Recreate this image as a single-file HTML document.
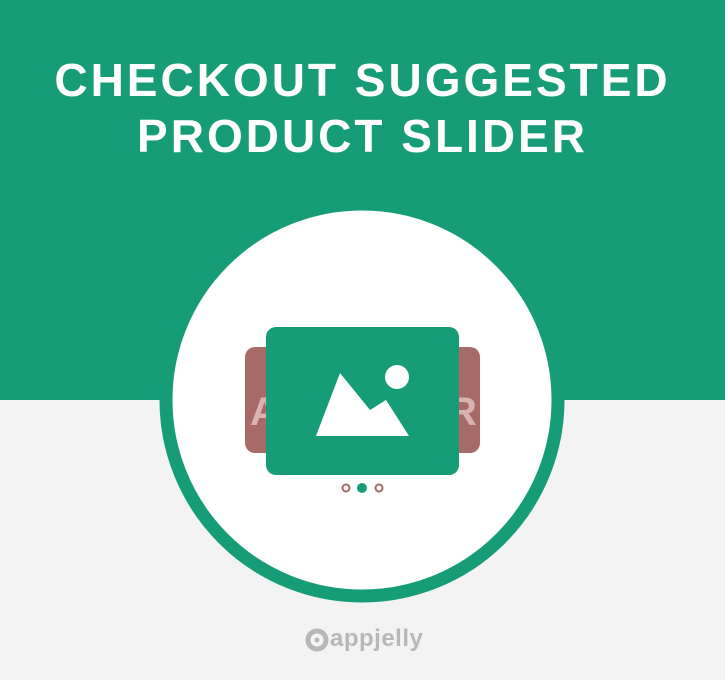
<!DOCTYPE html>
<html><head><style>
body{margin:0;width:725px;height:680px;overflow:hidden;background:#f3f3f3;position:relative;font-family:"Liberation Sans",sans-serif}
.top{position:absolute;left:0;top:0;width:725px;height:400px;background:#179c78}
h1{position:absolute;left:0;top:52px;width:725px;margin:0;text-align:center;color:#fff;font-size:46px;line-height:56px;font-weight:bold;letter-spacing:3px}
.logo{position:absolute;left:330px;top:625px;font-size:24px;font-weight:bold;color:#b8b8b8;letter-spacing:0.5px}
</style></head><body>
<div class="top"></div>
<h1>CHECKOUT SUGGESTED<br>PRODUCT SLIDER</h1>
<svg style="position:absolute;left:0;top:0" width="725" height="680">
<circle cx="362" cy="400" r="196" fill="#fff" stroke="#179c78" stroke-width="13"/>
<rect x="245" y="347" width="235" height="106" rx="10" fill="#a86a67"/>
<text x="250" y="425" font-family="Liberation Sans" font-weight="bold" font-size="40" fill="#d9b3b1">A</text>
<text x="448" y="425" font-family="Liberation Sans" font-weight="bold" font-size="40" fill="#d9b3b1">R</text>
<rect x="266" y="327" width="193" height="148" rx="10" fill="#179c78"/>
<polygon points="316,436 340,373 370,410 386,400 409,436" fill="#fff"/>
<circle cx="397" cy="377" r="12" fill="#fff"/>
<circle cx="346" cy="488" r="3.5" fill="none" stroke="#a86a67" stroke-width="2"/>
<circle cx="362" cy="488" r="5" fill="#179c78"/>
<circle cx="379" cy="488" r="3.5" fill="none" stroke="#a86a67" stroke-width="2"/>
<circle cx="317" cy="640" r="9" fill="none" stroke="#b8b8b8" stroke-width="5"/>
<circle cx="317" cy="640" r="2.5" fill="#b8b8b8"/>
</svg>
<div class="logo">appjelly</div>
</body></html>
